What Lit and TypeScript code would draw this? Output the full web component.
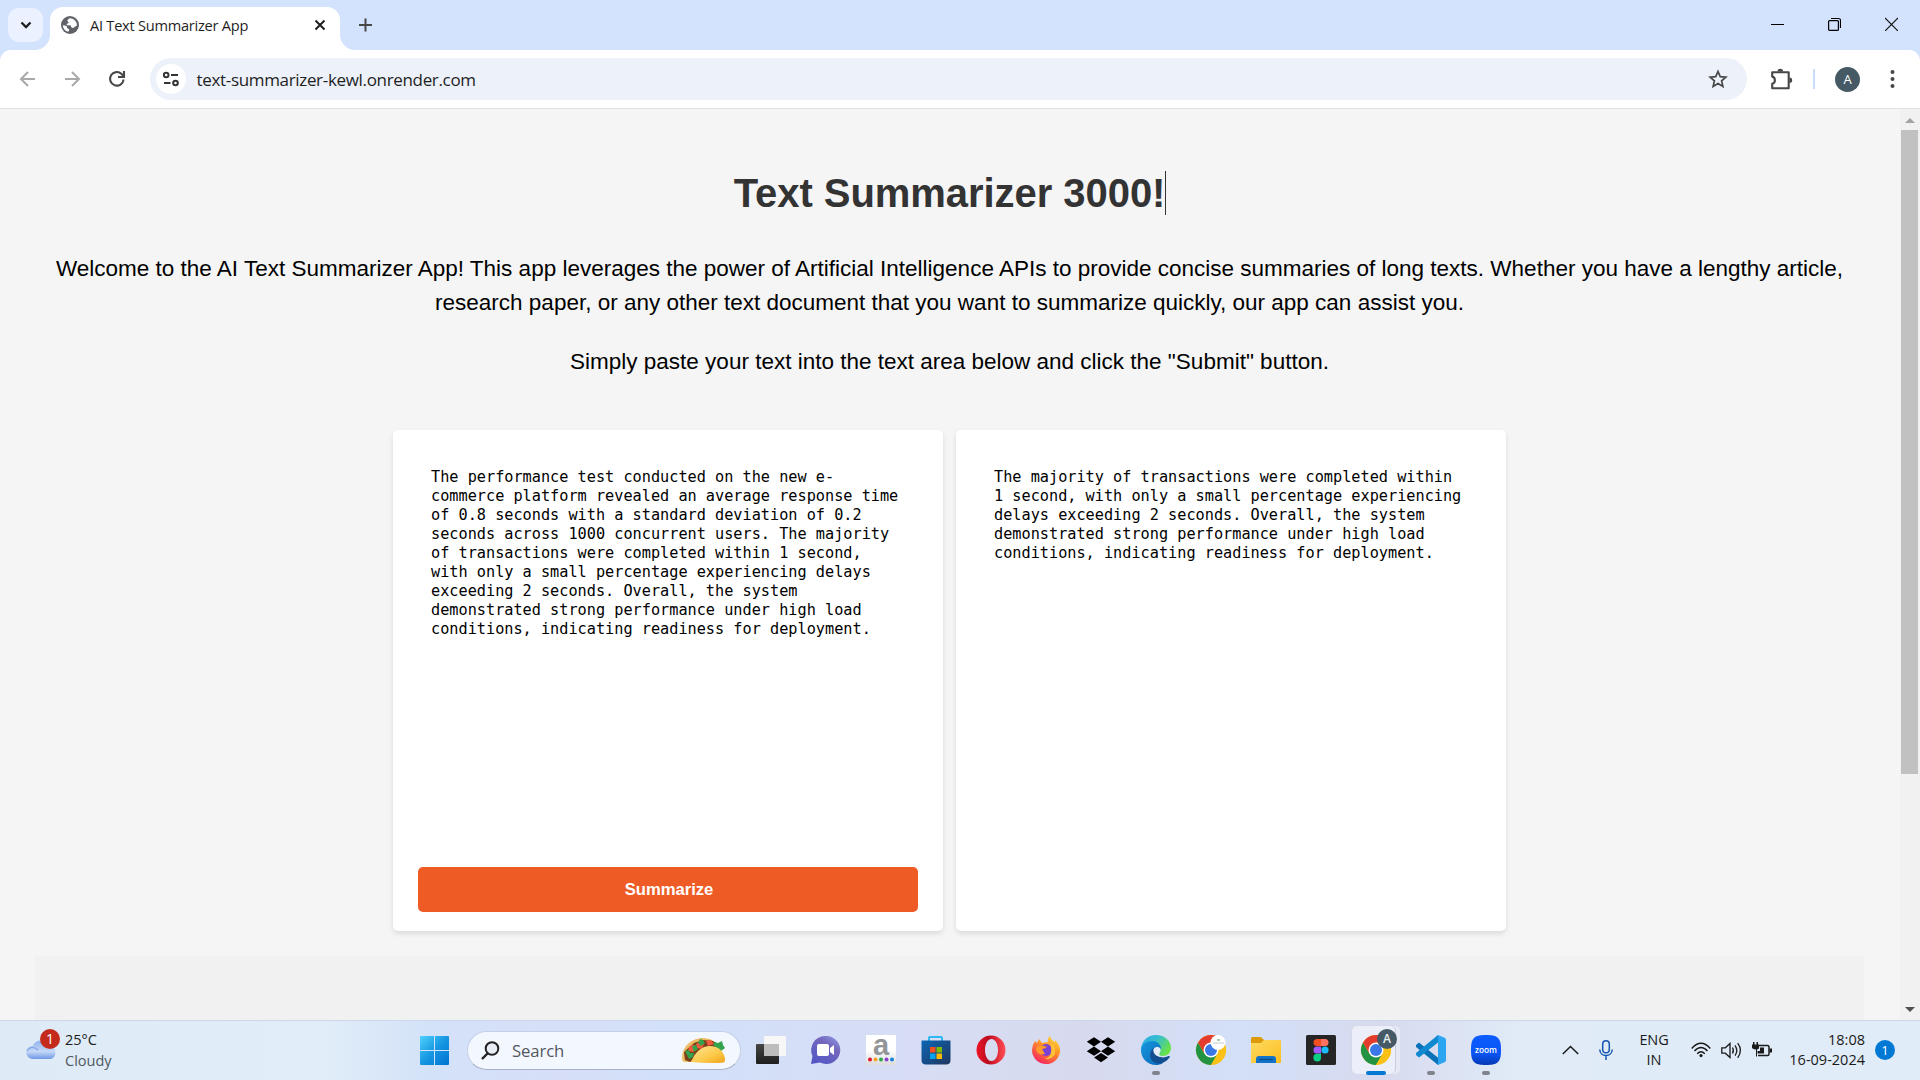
import { LitElement, html, css, svg } from "lit";
import { customElement } from "lit/decorators.js";

const CHROME = svg`
  <circle cx="15" cy="15" r="15" fill="#fbc116"/>
  <path d="M2 7.500 A15 15 0 0 0 15 30 L21.500 18.700 L15 15 L8.500 18.700 Z" fill="#229342"/>
  <path d="M15 30 A15 15 0 0 0 28 7.500 L15 7.500 L21.500 18.700 Z" fill="#fbc116"/>
  <path d="M2 7.500 A15 15 0 0 1 28 7.500 L15 7.500 L8.500 18.700 Z" fill="#e33b2e"/>
  <circle cx="15" cy="15" r="7.500" fill="#fff"/>
  <circle cx="15" cy="15" r="6" fill="#3b78e7"/>`;

@customElement("browser-chrome")
class BrowserChrome extends LitElement {
  static styles = css`
    :host { display: flex; flex-direction: column; height: 109px; box-sizing: border-box; background: #d3e3fd;
      font-family: "Segoe UI", "Open Sans", sans-serif; border-bottom: 1px solid #dfe1e3; color: #1f1f1f; }
    svg { display: block; flex: none; }
    .tabs { display: flex; height: 50px; padding-left: 8px; }
    .menu { margin-top: 8px; width: 35px; height: 34px; border-radius: 11px; background: #ebf1fe; display: grid; place-items: center; }
    .flare { align-self: flex-end; width: 15px; height: 15px; }
    .flare.l { margin-left: -8px; background: radial-gradient(circle at 0 0, transparent 14.6px, #fff 15.2px); }
    .flare.r { background: radial-gradient(circle at 100% 0, transparent 14.6px, #fff 15.2px); }
    .tab { display: flex; align-items: center; width: 290px; box-sizing: border-box; height: 43px; margin-top: 7px; padding: 0 14px 7px 11px; background: #fff; border-radius: 13px 13px 0 0; }
    .title { margin-left: 11px; font-size: 14.6px; letter-spacing: -0.250px; flex: 1; white-space: nowrap; }
    .plus { margin: 18px 0 0 4px; }
    .win { margin: 17px 22px 0 auto; display: flex; gap: 44px; }
    .bar { flex: 1; display: flex; align-items: center; background: #fff; border-radius: 11px 11px 0 0; padding: 0 14px 0 18px; }
    .nav { display: flex; gap: 24px; }
    .reload { margin-left: 1px; }
    .omni { margin-left: 23px; flex: none; width: 1597px; height: 42px; box-sizing: border-box; border-radius: 21px; background: #ecf1fa; display: flex; align-items: center; padding: 0 19px 0 6px; }
    .site { width: 30px; height: 30px; border-radius: 50%; background: #fff; display: grid; place-items: center; }
    .url { margin-left: 10.500px; font-size: 17px; letter-spacing: -.33px; flex: 1; white-space: nowrap; }
    .ext { margin-left: 22px; }
    .sep { width: 2px; height: 20px; background: #c9ddfb; margin-left: 20px; }
    .me { margin-left: 20px; width: 25px; height: 25px; border-radius: 50%; background: #455a64; color: #fff; display: grid; place-items: center; font-size: 13px; line-height: 1; }
    .dots { margin-left: 22px; }
  `;
  render() {
    return html`
      <div class="tabs">
        <div class="menu"><svg width="12" height="8" viewBox="0 0 12 8"><path d="M1.500 1.500 6 6l4.500-4.500" fill="none" stroke="#1f1f1f" stroke-width="2.300"/></svg></div>
        <div class="flare l"></div>
        <div class="tab">
          <svg width="18" height="18" viewBox="0 0 18 18"><circle cx="9" cy="9" r="9" fill="#5f6368"/><path d="M8.800 2.200C7.500 3 6.300 3.600 6.400 4.800c.1 1 1.300.9 1.200 1.900-.1.900-1.800.6-2 1.500-.2 1 1.500 1 3 1.100 1.800.1 1.300 2 2.400 2.500 1 .4 2.400-.3 3.200-1.200.6-.7 1.200-1 1.800-.9A7.200 7.200 0 0 0 8.800 2.200ZM1.800 9.200c.3 3.600 2.700 6.100 5.600 6.600.1-.9.900-1.200.8-2.200-.1-1-1.600-.7-2-1.700-.3-.9-.2-1.700-1.400-2.100-1-.4-2-.6-3-.6Z" fill="#fff"/></svg>
          <span class="title">AI Text Summarizer App</span>
          <svg width="12" height="12" viewBox="0 0 12 12"><path d="M1.500 1.500l9 9M10.500 1.500l-9 9" stroke="#1f1f1f" stroke-width="2"/></svg>
        </div>
        <div class="flare r"></div>
        <svg class="plus" width="13" height="14" viewBox="0 0 13 14"><path d="M6.500.5v13M0 7h13" stroke="#474747" stroke-width="2"/></svg>
        <div class="win">
          <svg width="13" height="14" viewBox="0 0 13 14"><path d="M0 7.500h13" stroke="#000"/></svg>
          <svg width="13" height="14" viewBox="0 0 13 14" fill="none" stroke="#000" stroke-width="1.200"><rect x=".6" y="3.600" width="9.800" height="9.800" rx="1"/><path d="M3 1.500h7.500a2 2 0 0 1 2 2V11"/></svg>
          <svg width="13" height="14" viewBox="0 0 13 14"><path d="M0 1l13 13M13 1l-13 13" stroke="#111" stroke-width="1.200"/></svg>
        </div>
      </div>
      <div class="bar">
        <div class="nav">
          <svg width="20" height="20" viewBox="0 0 20 20" fill="none" stroke="#a9a9a9" stroke-width="2"><path d="M17 10H3.500M10 3l-7 7 7 7"/></svg>
          <svg width="20" height="20" viewBox="0 0 20 20" fill="none" stroke="#a9a9a9" stroke-width="2"><path d="M3 10h13.500M10 3l7 7-7 7"/></svg>
          <svg class="reload" width="20" height="20" viewBox="0 0 20 20" fill="none" stroke="#474747" stroke-width="2.100"><path d="M16.600 10.500a6.800 6.800 0 1 1-2-5.500L17 7.500"/><path d="M17 2v6h-6"/></svg>
        </div>
        <div class="omni">
          <div class="site"><svg width="18" height="16" viewBox="0 0 18 16" fill="none" stroke="#333" stroke-width="2"><circle cx="4.200" cy="4" r="2.300"/><path d="M9 4h7M2 12h6.500"/><circle cx="13.500" cy="12" r="2.300"/></svg></div>
          <span class="url">text-summarizer-kewl.onrender.com</span>
          <svg width="20" height="20" viewBox="0 0 20 20"><path d="M10 2.500l2.250 5.200 5.600.5-4.250 3.700 1.300 5.500L10 14.500l-4.900 2.900 1.300-5.500L2.150 8.200l5.600-.5Z" fill="none" stroke="#474747" stroke-width="1.700"/></svg>
        </div>
        <svg class="ext" width="24" height="24" viewBox="0 0 24 24"><path d="M3.200 5.200h16.500v16H3.200v-4.400c3.600-.8 3.600-6.400 0-7.200Z" fill="none" stroke="#474747" stroke-width="2.100" stroke-linejoin="round"/><path d="M8.500 4.500a2.800 2.800 0 0 1 5.600 0ZM20.500 10.500a2.700 2.700 0 0 1 0 5.400Z" fill="#474747"/></svg>
        <div class="sep"></div>
        <div class="me">A</div>
        <svg class="dots" width="20" height="20" viewBox="0 0 20 20" fill="#474747"><circle cx="10.500" cy="3" r="2"/><circle cx="10.500" cy="10" r="2"/><circle cx="10.500" cy="17" r="2"/></svg>
      </div>`;
  }
}

@customElement("summarizer-page")
class SummarizerPage extends LitElement {
  static styles = css`
    :host { display: flex; height: 911px; overflow: hidden; background: #f5f5f5; font-family: Arial, "Liberation Sans", sans-serif; color: #000; }
    .content { flex: 1; padding: 62px 36px 0 35px; box-sizing: border-box; display: flex; flex-direction: column; align-items: center; }
    h1 { margin: 0; height: 44px; line-height: 44px; padding-left: 1px; font-size: 40px; letter-spacing: -.05px; color: #333; border-right: 1px solid #333; white-space: nowrap; }
    p { margin: 0; width: 100%; text-align: center; font-size: 22.5px; line-height: 33.75px; }
    .intro { margin-top: 37px; }
    .hint { margin-top: 25.500px; }
    .cards { margin-top: 51px; display: flex; gap: 13px; }
    .card { width: 550px; height: 501px; box-sizing: border-box; padding: 38px 25px 19px 38px; background: #fff; border-radius: 5px; box-shadow: 0 2.500px 5px rgba(0,0,0,.1); display: flex; flex-direction: column; justify-content: space-between; }
    .text { width: 474px; font-family: Consolas, "DejaVu Sans Mono", monospace; font-size: 15.220px; line-height: 19px; }
    button { margin: 0 0 0 -13px; height: 45px; padding: 2px 0 0 2px; border: 0; border-radius: 5px; background: #ef5b25; color: #fff; font: bold 16.670px Arial, "Liberation Sans", sans-serif; letter-spacing: -.05px; }
    .next { flex: 1; align-self: stretch; margin-top: 25px; background: #f1f1f1; }
    .scroll { width: 20px; background: #f1f1f1; display: flex; flex-direction: column; align-items: center; padding: 9px 1px 8px 0; box-sizing: border-box; }
    .thumb { margin-top: 7px; width: 17px; height: 644px; background: #c1c1c1; }
    .scroll svg:last-child { margin-top: auto; }
  `;
  render() {
    return html`
      <div class="content">
        <h1>Text Summarizer 3000!</h1>
        <p class="intro">Welcome to the AI Text Summarizer App! This app leverages the power of Artificial Intelligence APIs to provide concise summaries of long texts. Whether you have a lengthy article, research paper, or any other text document that you want to summarize quickly, our app can assist you.</p>
        <p class="hint">Simply paste your text into the text area below and click the "Submit" button.</p>
        <div class="cards">
          <div class="card">
            <div class="text">The performance test conducted on the new e-commerce platform revealed an average response time of 0.8 seconds with a standard deviation of 0.2 seconds across 1000 concurrent users. The majority of transactions were completed within 1 second, with only a small percentage experiencing delays exceeding 2 seconds. Overall, the system demonstrated strong performance under high load conditions, indicating readiness for deployment.</div>
            <button>Summarize</button>
          </div>
          <div class="card">
            <div class="text">The majority of transactions were completed within 1 second, with only a small percentage experiencing delays exceeding 2 seconds. Overall, the system demonstrated strong performance under high load conditions, indicating readiness for deployment.</div>
          </div>
        </div>
        <div class="next"></div>
      </div>
      <div class="scroll">
        <svg width="10" height="5" viewBox="0 0 10 5"><path d="M5 0l5 5H0Z" fill="#a3a3a3"/></svg>
        <div class="thumb"></div>
        <svg width="10" height="5" viewBox="0 0 10 5"><path d="M5 5l5-5H0Z" fill="#505050"/></svg>
      </div>`;
  }
}

@customElement("task-bar")
class TaskBar extends LitElement {
  static styles = css`
    :host { display: flex; height: 60px; box-sizing: border-box; border-top: 1px solid #cbd8ea; color: #1b1b1b;
      font-family: "Segoe UI", "Open Sans", sans-serif; font-size: 14.500px;
      background: linear-gradient(90deg, #deebf7 0, #e1edf8 320px, #d4e2f9 430px, #d6dff7 560px, #d2e0f9 680px, #d6def6 860px, #d7daee 1090px, #d3e0f8 1240px, #d7daee 1380px, #e0ebf7 1520px, #e0ecf8 100%); }
    svg { display: block; flex: none; overflow: visible; }
    .weather { width: 394px; margin-left: 26px; display: flex; padding-top: 7px; }
    .weather .lines { margin-left: 9px; padding-top: 2px; line-height: 20.500px; }
    .muted { color: #51575e; }
    .start { margin-top: 15px; }
    .search { margin: 10px 0 0 18px; width: 274px; height: 39px; box-sizing: border-box; border: 1px solid #c5cfe6; border-bottom-color: #a8b1c8; border-radius: 20px; background: #f3f7fe; display: flex; align-items: center; padding: 0 15px 0 13px; }
    .search span { flex: 1; margin-left: 13px; color: #53575f; font-size: 16.700px; letter-spacing: -.1px; }
    .apps { display: flex; gap: 25px; margin-left: 15px; padding-top: 14px; }
    .app { width: 30px; height: 45px; display: flex; flex-direction: column; align-items: center; justify-content: space-between; position: relative; }
    .run { width: 8px; height: 4px; border-radius: 2px; background: #80838c; margin-bottom: 5px; }
    .badge { position: absolute; right: -6px; top: -6px; width: 20px; height: 20px; border-radius: 50%; background: #455a64; color: #e8eef0; display: grid; place-items: center; font: 600 12px/1 "Open Sans", sans-serif; }
    .active::before { content: ""; position: absolute; left: -9px; top: -9px; width: 43px; height: 48px; border-radius: 5px; background: #eceff9; border-right: 1px solid #c8cddd; box-shadow: 4px 0 0 #e5e9f5, 0 0 0 1px #d5d9e8; }
    .active > * { z-index: 1; }
    .active .run { width: 20px; background: #0078d4; }
    .tray { margin-left: auto; margin-right: 25px; display: flex; align-items: center; padding-bottom: 1px; }
    .mic { margin-left: 20px; }
    .lang { width: 36px; margin-left: 23px; text-align: center; line-height: 20.500px; letter-spacing: -.1px; }
    .status { display: flex; gap: 10px; margin-left: 19px; }
    .clock { width: 80px; margin-left: 13px; text-align: right; line-height: 20.500px; white-space: nowrap; display: flex; flex-direction: column; align-items: flex-end; }
    .count { margin-left: 10px; width: 20px; height: 20px; border-radius: 50%; background: #0078d4; color: #fff; display: grid; place-items: center; font-size: 13px; line-height: 1; }
  `;

  app(icon: unknown, running = false) {
    return html`<div class="app"><svg width="30" height="30" viewBox="0 0 30 30">${icon}</svg>${running ? html`<div class="run"></div>` : ""}</div>`;
  }

  render() {
    return html`
      <div class="weather">
        <svg width="30" height="32" viewBox="0 0 30 32">
          <defs><linearGradient id="cl" x1="0" y1="0" x2="0" y2="1"><stop offset="0" stop-color="#8fb2ee"/><stop offset=".6" stop-color="#c4d7f6"/><stop offset="1" stop-color="#6d98e4"/></linearGradient></defs>
          <path d="M7 31a6.500 6.500 0 0 1-.5-13A9.500 9.500 0 0 1 24 18.500 6.300 6.300 0 0 1 24 31Z" fill="url(#cl)"/>
          <path d="M1 23c2-4.500 8-4.500 11-1" fill="none" stroke="#7da2e6" stroke-width="1.200"/>
          <circle cx="24" cy="11" r="10" fill="#c42b1c"/><text x="24" y="16" text-anchor="middle" font-size="14" fill="#fff">1</text>
        </svg>
        <div class="lines"><div>25°C</div><div class="muted">Cloudy</div></div>
      </div>
      <svg class="start" width="29" height="29" viewBox="0 0 29 29">
        <defs><linearGradient id="wn" x1="0" y1="0" x2="1" y2="1"><stop offset="0" stop-color="#4fd0fb"/><stop offset=".5" stop-color="#1697e2"/><stop offset="1" stop-color="#0072d0"/></linearGradient></defs>
        <path d="M1 0h13v14H0V1a1 1 0 0 1 1-1ZM15 0h13a1 1 0 0 1 1 1v13H15ZM0 15h14v14H1a1 1 0 0 1-1-1ZM15 15h14v13a1 1 0 0 1-1 1H15Z" fill="url(#wn)"/>
      </svg>
      <div class="search">
        <svg width="18" height="19" viewBox="0 0 18 19"><circle cx="11" cy="7.500" r="6.300" fill="#e9edf6" stroke="#222" stroke-width="2"/><path d="M6.500 12.500L1 18" stroke="#222" stroke-width="2.400"/></svg>
        <span>Search</span>
        <svg width="43" height="25" viewBox="0 0 43 25">
          <defs><linearGradient id="tc" x1="0" y1="0" x2="1" y2="1"><stop offset="0" stop-color="#ffe59a"/><stop offset=".6" stop-color="#fcc948"/><stop offset="1" stop-color="#f0a31a"/></linearGradient></defs>
          <path d="M0 20C0 9 9 0 21 0c8 0 13 4 16 9L12 24H2Q0 23 0 20Z" fill="#edbd67"/>
          <path d="M2 14L12 5l9-3 10 1 6 5-22 10-7 6-5-2Z" fill="#7b3f1c"/>
          <path d="M7 9l4-3 3 4-3 4-5-1ZM14 6l5-3 3 3-2 5-5-1ZM24 3l5-1 3 4-6 2Z" fill="#f05a3d"/>
          <path d="M16 5l2-4 3 1 2 3-4 3ZM3 13l4-1 1 3 4 0-1 4-4 2ZM10 8l4-1 2 4-4 3ZM31 7l2-3 3 1 4-2 1 4 2 3-4 3Z" fill="#35a34b"/>
          <path d="M9 24C13 14 20 8 28 8s15 6 15 14q0 2.500-3 2.800-15 .8-31-.8Z" fill="url(#tc)"/>
        </svg>
      </div>
      <div class="apps">
        ${this.app(svg`<defs><linearGradient id="tv" x1="0" y1="0" x2="0" y2="1"><stop offset="0" stop-color="#454545"/><stop offset="1" stop-color="#1e1e1e"/></linearGradient></defs><rect x="0" y="9" width="23" height="20" rx="1" fill="url(#tv)"/><rect x="8" y="1" width="22" height="20" rx="1" fill="#f7f7f7"/><path d="M8 9h15v12H8Z" fill="#bdbdbd"/>`)}
        ${this.app(svg`<defs><linearGradient id="ch" x1="1" y1="0" x2=".3" y2="1"><stop offset="0" stop-color="#8fa0ea"/><stop offset=".4" stop-color="#7467bd"/><stop offset="1" stop-color="#5558c4"/></linearGradient></defs><path d="M15 1a14 14 0 1 1-6 26.500L0 29l1.500-8A14 14 0 0 1 15 1Z" fill="url(#ch)"/><rect x="6" y="9" width="12" height="12" rx="2" fill="#fff"/><path d="M19 13l4-3v10l-4-3Z" fill="#fff"/>`)}
        ${this.app(svg`<defs><linearGradient id="am" x1="0" y1="0" x2="0" y2="1"><stop offset=".5" stop-color="#fff"/><stop offset="1" stop-color="#dcdcdc"/></linearGradient></defs><rect width="30" height="30" fill="url(#am)"/><text x="15" y="19.500" text-anchor="middle" font-family="Liberation Sans" font-weight="bold" font-size="29" fill="#939598">a</text><circle cx="4" cy="24.500" r="2" fill="#e8112d"/><circle cx="9.500" cy="24.500" r="2" fill="#f5a01d"/><circle cx="15" cy="24.500" r="2" fill="#2aa84a"/><circle cx="20.500" cy="24.500" r="2" fill="#8c3fd0"/><circle cx="26" cy="24.500" r="2" fill="#1583d8"/>`)}
        ${this.app(svg`<defs><linearGradient id="st" x1="0" y1="0" x2="1" y2="1"><stop offset="0" stop-color="#0b66b5"/><stop offset="1" stop-color="#20365f"/></linearGradient></defs><path d="M8 7V3q0-1 1-1h11q1 0 1 1v4" fill="none" stroke="#2cb8f0" stroke-width="2"/><path d="M.5 5.500h29V25q0 4.500-4.500 4.500H5Q.5 29.500.5 25Z" fill="url(#st)"/><path d="M9 12h5.500v5.500H9Z" fill="#f25022"/><path d="M15.500 12H21v5.500h-5.500Z" fill="#7fba00"/><path d="M9 18.500h5.500V24H9Z" fill="#00a4ef"/><path d="M15.500 18.500H21V24h-5.500Z" fill="#ffb900"/>`)}
        ${this.app(svg`<defs><linearGradient id="op" x1="0" y1="0" x2="1" y2="0"><stop offset="0" stop-color="#f01226"/><stop offset=".4" stop-color="#b80d20"/><stop offset=".6" stop-color="#d81e30"/><stop offset="1" stop-color="#ff5055"/></linearGradient></defs><path fill-rule="evenodd" d="M15 .5a14.500 14.500 0 1 0 0 29 14.500 14.500 0 0 0 0-29ZM15.500 4C19.500 4 22 9 22 15s-2.500 11-6.500 11S9 21 9 15 11.500 4 15.500 4Z" fill="url(#op)"/>`)}
        ${this.app(svg`<defs><linearGradient id="ff" x1=".9" y1="0" x2=".3" y2="1"><stop offset="0" stop-color="#ffe63d"/><stop offset=".45" stop-color="#ff9228"/><stop offset="1" stop-color="#f5245f"/></linearGradient></defs><path d="M4 6l2 2 2-4 3 4q4-1 6-1-1-4 2-6 1 4 5 6l0-2q6 6 5 12A14 14 0 0 1 15 29 14 14 0 0 1 1 15q0-5 3-9Z" fill="url(#ff)"/><circle cx="15" cy="15" r="6" fill="#7a41d5"/><path d="M6 12q5-3 10 0-2 2-5 2l3 5q-8 2-9-5Z" fill="#ff9a2b"/><path d="M19 8q7 3 5 11-3 6-10 5 9-3 5-16Z" fill="#ffc035"/>`)}
        ${this.app(svg`<path d="M8 2.200l7 4.600-7 4.600L.8 6.800ZM22 2.200l7.200 4.600-7.200 4.600-7-4.600ZM8 11.600l7 4.600-7 4.600-7.200-4.600ZM22 11.600l7.200 4.600-7.200 4.600-7-4.600ZM15 18l7 4.500-7 4.800-7-4.800Z" fill="#000"/>`)}
        ${this.app(svg`<defs><linearGradient id="e1" x1="0" y1="0" x2="1" y2=".5"><stop offset="0" stop-color="#2ba8e4"/><stop offset=".5" stop-color="#35bdd0"/><stop offset="1" stop-color="#67e04c"/></linearGradient><linearGradient id="e2" x1="0" y1="0" x2="1" y2="1"><stop offset="0" stop-color="#1598de"/><stop offset="1" stop-color="#0d66b8"/></linearGradient></defs><path d="M.3 12C2 4 8 0 15 0c9 0 15 6 15 13 0 5-4 8-8 8-3 0-5-1-4-3 2-2 1-8-6-8-5 0-10 3-12 5Z" fill="url(#e1)"/><path d="M0 15c0-5 5-9 11-9s9 4 9 8c-2-2-7-2-8 2s3 13 10 12c-2 1.500-5 2-7 2-9 0-15-7-15-15Z" fill="url(#e2)"/><path d="M12.500 13c-4 3-4.500 9-1 13 4 4 12 3.500 17-3.500.8-1-.2-1.700-1-1.500-5 3-15 1.500-15-8Z" fill="#124c91"/><path d="M18.800 17.500c1.500-1.700 1-5-2-5.500-3-.4-4.800 2-4.300 4.500.6 3 3.500 5 7.500 5.500-1.500-1-2.500-3-1.200-4.500Z" fill="#e4ebf8"/>`, true)}
        ${this.app(svg`${CHROME}<circle cx="22" cy="7.500" r="7.500" fill="#fff"/><path d="M21 5h3" stroke="#4a9b5a"/><path d="M17 8h11" stroke="#c9c9c9"/>`)}
        ${this.app(svg`<defs><linearGradient id="fo" x1="0" y1="0" x2="1" y2="1"><stop offset="0" stop-color="#ffdb62"/><stop offset="1" stop-color="#fbbd20"/></linearGradient></defs><path d="M0 8V3.500Q0 2 1.500 2H9q1 0 2 1l2 2v4Z" fill="#dd9a0a"/><path d="M0 8h10l3-3h16q1 0 1 1v21q0 1-1 1H0Z" fill="url(#fo)"/><path d="M5 28v-4q0-3 3-3h14q3 0 3 3v4Z" fill="#1173c7"/><path d="M8 24.500h14" stroke="#0a4c8c" stroke-width="1.300"/>`)}
        ${this.app(svg`<rect width="30" height="30" rx="1.500" fill="#252525"/><path d="M15 4v7h-4a3.500 3.500 0 0 1 0-7Z" fill="#f24e1e"/><path d="M15 4h4a3.500 3.500 0 0 1 0 7h-4Z" fill="#ff7262"/><path d="M15 11.500v7h-4a3.500 3.500 0 0 1 0-7Z" fill="#a259ff"/><circle cx="19" cy="15" r="3.600" fill="#1abcfe"/><path d="M15 18.800v3.600a3.800 3.800 0 1 1-3.800-3.600Z" fill="#0acf83"/>`)}
        <div class="app active"><svg width="30" height="30" viewBox="0 0 30 30">${CHROME}</svg><div class="badge">A</div><div class="run"></div></div>
        ${this.app(svg`<path d="M0 10l3-2.500L25 25l-3 5L0 12Z" fill="#0a72b8"/><path d="M0 20l3 2.500L24 6 22 0 0 18Z" fill="#1089d0"/><path d="M22 0l7 3q1 .5 1 2v20q0 1.500-1 2l-7 3Z" fill="#2ba5ef"/><path d="M22 8v14l-9-7Z" fill="#d7ddee"/>`, true)}
        ${this.app(svg`<defs><linearGradient id="zm" x1="0" y1="0" x2="0" y2="1"><stop offset="0" stop-color="#0b5cff"/><stop offset=".6" stop-color="#0a56f5"/><stop offset="1" stop-color="#0638b5"/></linearGradient></defs><path d="M15 0C27 0 30 3 30 15S27 30 15 30 0 27 0 15 3 0 15 0Z" fill="url(#zm)"/><text x="15" y="17.500" text-anchor="middle" font-family="Open Sans" font-weight="600" font-size="9" textLength="22" lengthAdjust="spacingAndGlyphs" fill="#fff">zoom</text>`, true)}
      </div>
      <div class="tray">
        <svg width="17" height="10" viewBox="0 0 17 10"><path d="M.8 9l7.700-7.500L16.200 9" fill="none" stroke="#1b1b1b" stroke-width="1.500"/></svg>
        <svg class="mic" width="14" height="20" viewBox="0 0 14 20" fill="none" stroke="#1556b0" stroke-width="1.500"><rect x="3.700" y=".8" width="6.600" height="12" rx="3.300"/><path d="M.8 9.500c0 8 12.400 8 12.400 0M7 15.500V20"/></svg>
        <div class="lang"><div>ENG</div><div>IN</div></div>
        <div class="status">
          <svg width="20" height="16" viewBox="0 0 20 16" fill="none" stroke="#1b1b1b" stroke-width="1.400"><path d="M.7 6.500q9.300-10.500 18.600 0M3.500 9q6.500-7 13 0M6.200 11.700q3.800-4 7.600 0"/><circle cx="10" cy="13.600" r="1.600" fill="#1b1b1b" stroke="none"/></svg>
          <svg width="21" height="17" viewBox="0 0 21 17" fill="none" stroke="#1b1b1b" stroke-width="1.300"><path d="M.8 5.800h3.500L9 1.500v14l-4.700-4.300H.8Z"/><path d="M11.500 5.500q1.700 3 0 6M14 3.300q3.500 5.200 0 10.400M16.700 1.200q5.500 7.300 0 14.600"/></svg>
          <svg width="20" height="16" viewBox="0 0 20 16"><path d="M6.500 3.500h9q1.500 0 1.500 1.500v7q0 1.500-1.500 1.500H6" fill="none" stroke="#1b1b1b" stroke-width="1.500"/><path d="M17.500 6.500H20v4h-2.500ZM8 5.500h4v6H5.500V9H8ZM1 0h1.500v2.500h2V0H6v2.500h1V6q0 1-2 1.500v7H4v-7Q0 7 0 5.500v-3h1Z" fill="#1b1b1b"/></svg>
        </div>
        <div class="clock"><div>18:08</div><div>16-09-2024</div></div>
        <div class="count">1</div>
      </div>`;
  }
}

@customElement("app-root")
class AppRoot extends LitElement {
  static styles = css`:host { display: flex; flex-direction: column; width: 1920px; height: 1080px; overflow: hidden; }`;
  render() {
    return html`<browser-chrome></browser-chrome><summarizer-page></summarizer-page><task-bar></task-bar>`;
  }
}
